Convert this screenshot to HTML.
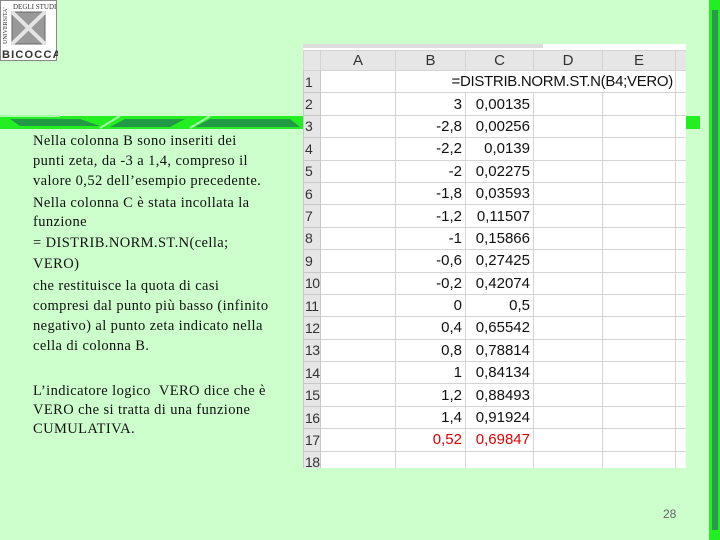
<!DOCTYPE html>
<html><head><meta charset="utf-8"><style>
body{margin:0;width:720px;height:540px;background:#ccffcc;position:relative;overflow:hidden;font-family:"Liberation Serif",serif}
.logo{position:absolute;left:0;top:0;width:57px;height:61px;background:#fff;border:1px solid #888;box-sizing:border-box}
.t{position:absolute;left:33px;font-size:14.5px;color:#111;white-space:nowrap;letter-spacing:0.4px}
#tbl{position:absolute;left:303px;top:44px;width:383px;height:424px;overflow:hidden;background:#fff}
table{border-collapse:collapse;table-layout:fixed;width:383px;font-family:"Liberation Sans",sans-serif;font-size:15px;position:absolute;top:6px;left:0}
td{height:22.4px;padding:0 3px;border:1px solid #d4d4d4;white-space:nowrap;overflow:visible;text-align:right;color:#111;box-sizing:border-box}
tr.h td{background:#e6e6e6;text-align:center;color:#333;height:20px}
td.n{background:#e6e6e6;text-align:left;color:#333;padding-left:1px;border-color:#c8c8c8;font-size:14px;letter-spacing:-0.5px}
.r{color:#d00}
</style></head><body>
<div class="logo">
<svg width="57" height="61" viewBox="0 0 57 61">
<rect x="11" y="11" width="33" height="32" fill="#999" stroke="#666"/>
<path d="M11 11L44 43M44 11L11 43" stroke="#e5e5e5" stroke-width="4"/>
<text x="12" y="8" font-size="7" font-family="Liberation Serif" fill="#333">DEGLI STUDI</text>
<text x="3" y="40" font-size="6" font-family="Liberation Serif" fill="#333" transform="rotate(-90 6 40)">UNIVERSITA'</text>
<text x="1" y="57" font-size="11" font-weight="bold" font-family="Liberation Sans" fill="#333" letter-spacing="1.2">BICOCCA</text>
</svg></div>
<svg style="position:absolute;left:0;top:110px" width="720" height="25">
<rect x="0" y="6" width="700" height="13" fill="#22ee22"/>
<polygon points="10,9 80,9 100,16 20,16" fill="#229944"/>
<polygon points="125,9 185,9 170,17 110,17" fill="#229944"/>
<polygon points="210,9 290,9 300,17 195,17" fill="#229944"/>
<path d="M0 6L60 6M100 18L120 6M190 18L210 6" stroke="#aaffaa" stroke-width="2"/>
</svg>
<div style="position:absolute;left:709px;top:0;width:11px;height:540px;background:#22ee22"></div>
<div style="position:absolute;left:712px;top:10px;width:6px;height:520px;background:#2a9a50"></div>
<div class="t" style="top:133px">Nella colonna B sono inseriti dei</div>
<div class="t" style="top:153px">punti zeta, da -3 a 1,4, compreso il</div>
<div class="t" style="top:173px">valore 0,52 dell’esempio precedente.</div>
<div class="t" style="top:195px">Nella colonna C è stata incollata la</div>
<div class="t" style="top:214px">funzione</div>
<div class="t" style="top:235px">= DISTRIB.NORM.ST.N(cella;</div>
<div class="t" style="top:256px">VERO)</div>
<div class="t" style="top:278px">che restituisce la quota di casi</div>
<div class="t" style="top:298px">compresi dal punto più basso (infinito</div>
<div class="t" style="top:318px">negativo) al punto zeta indicato nella</div>
<div class="t" style="top:338px">cella di colonna B.</div>
<div class="t" style="top:383px">L’indicatore logico &nbsp;VERO dice che è</div>
<div class="t" style="top:402px">VERO che si tratta di una funzione</div>
<div class="t" style="top:421px">CUMULATIVA.</div>
<div style="position:absolute;left:663px;top:507px;font:12px 'Liberation Sans',sans-serif;color:#666">28</div>
<div id="tbl">
<div style="position:absolute;left:0;top:0;width:240px;height:4px;background:#ddd"></div>
<table>
<colgroup><col style="width:17px"><col style="width:75px"><col style="width:70px"><col style="width:68px"><col style="width:69px"><col style="width:73px"><col style="width:11px"></colgroup>
<tr class="h"><td></td><td>A</td><td>B</td><td>C</td><td>D</td><td>E</td><td></td></tr>
<tr><td class="n">1</td><td></td><td colspan="4" style="text-align:right;padding-right:2px;letter-spacing:-0.3px">=DISTRIB.NORM.ST.N(B4;VERO)</td><td></td></tr>
<tr><td class="n">2</td><td></td><td>3</td><td>0,00135</td><td></td><td></td><td></td></tr>
<tr><td class="n">3</td><td></td><td>-2,8</td><td>0,00256</td><td></td><td></td><td></td></tr>
<tr><td class="n">4</td><td></td><td>-2,2</td><td>0,0139</td><td></td><td></td><td></td></tr>
<tr><td class="n">5</td><td></td><td>-2</td><td>0,02275</td><td></td><td></td><td></td></tr>
<tr><td class="n">6</td><td></td><td>-1,8</td><td>0,03593</td><td></td><td></td><td></td></tr>
<tr><td class="n">7</td><td></td><td>-1,2</td><td>0,11507</td><td></td><td></td><td></td></tr>
<tr><td class="n">8</td><td></td><td>-1</td><td>0,15866</td><td></td><td></td><td></td></tr>
<tr><td class="n">9</td><td></td><td>-0,6</td><td>0,27425</td><td></td><td></td><td></td></tr>
<tr><td class="n">10</td><td></td><td>-0,2</td><td>0,42074</td><td></td><td></td><td></td></tr>
<tr><td class="n">11</td><td></td><td>0</td><td>0,5</td><td></td><td></td><td></td></tr>
<tr><td class="n">12</td><td></td><td>0,4</td><td>0,65542</td><td></td><td></td><td></td></tr>
<tr><td class="n">13</td><td></td><td>0,8</td><td>0,78814</td><td></td><td></td><td></td></tr>
<tr><td class="n">14</td><td></td><td>1</td><td>0,84134</td><td></td><td></td><td></td></tr>
<tr><td class="n">15</td><td></td><td>1,2</td><td>0,88493</td><td></td><td></td><td></td></tr>
<tr><td class="n">16</td><td></td><td>1,4</td><td>0,91924</td><td></td><td></td><td></td></tr>
<tr><td class="n">17</td><td></td><td class="r">0,52</td><td class="r">0,69847</td><td></td><td></td><td></td></tr>
<tr><td class="n">18</td><td></td><td></td><td></td><td></td><td></td><td></td></tr>
</table>
</div>
</body></html>
